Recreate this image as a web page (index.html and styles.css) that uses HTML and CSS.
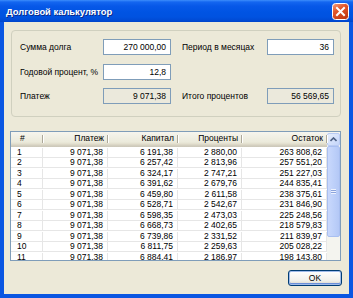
FILE: index.html
```html
<!DOCTYPE html>
<html lang="ru">
<head>
<meta charset="utf-8">
<title>Долговой калькулятор</title>
<link rel="stylesheet" href="styles.css">
</head>
<body>
<div class="window">
  <div class="titlebar">
    <span class="title">Долговой калькулятор</span>
    <span class="close">
      <svg width="17" height="17" viewBox="0 0 17 17">
        <defs>
          <linearGradient id="cg" x1="0" y1="0" x2="0.6" y2="1">
            <stop offset="0" stop-color="#f0a283"/>
            <stop offset="0.45" stop-color="#e2562a"/>
            <stop offset="1" stop-color="#c23a12"/>
          </linearGradient>
        </defs>
        <rect x="0.5" y="0.5" width="16" height="16" rx="3" fill="url(#cg)" stroke="#ffffff"/>
        <path d="M5 5 L12 12 M12 5 L5 12" stroke="#ffffff" stroke-width="2" stroke-linecap="square"/>
      </svg>
    </span>
  </div>
  <div class="client">
    <div class="group">
      <span class="lbl">Сумма долга</span>
      <span class="input">270 000,00</span>
      <span class="lbl second">Период в месяцах</span>
      <span class="input">36</span>

      <span class="lbl">Годовой процент, %</span>
      <span class="input">12,8</span>
      <span class="lbl second"></span>
      <span class="blank"></span>

      <span class="lbl">Платеж</span>
      <span class="input ro">9 071,38</span>
      <span class="lbl second">Итого процентов</span>
      <span class="input ro">56 569,65</span>
    </div>

    <div class="listview">
      <div class="table">
        <div class="row head">
          <span class="c num">#</span>
          <span class="c">Платеж</span>
          <span class="c">Капитал</span>
          <span class="c">Проценты</span>
          <span class="c">Остаток</span>
        </div>
        <div class="row"><span class="c num">1</span><span class="c">9 071,38</span><span class="c">6 191,38</span><span class="c">2 880,00</span><span class="c">263 808,62</span></div>
        <div class="row"><span class="c num">2</span><span class="c">9 071,38</span><span class="c">6 257,42</span><span class="c">2 813,96</span><span class="c">257 551,20</span></div>
        <div class="row"><span class="c num">3</span><span class="c">9 071,38</span><span class="c">6 324,17</span><span class="c">2 747,21</span><span class="c">251 227,03</span></div>
        <div class="row"><span class="c num">4</span><span class="c">9 071,38</span><span class="c">6 391,62</span><span class="c">2 679,76</span><span class="c">244 835,41</span></div>
        <div class="row"><span class="c num">5</span><span class="c">9 071,38</span><span class="c">6 459,80</span><span class="c">2 611,58</span><span class="c">238 375,61</span></div>
        <div class="row"><span class="c num">6</span><span class="c">9 071,38</span><span class="c">6 528,71</span><span class="c">2 542,67</span><span class="c">231 846,90</span></div>
        <div class="row"><span class="c num">7</span><span class="c">9 071,38</span><span class="c">6 598,35</span><span class="c">2 473,03</span><span class="c">225 248,56</span></div>
        <div class="row"><span class="c num">8</span><span class="c">9 071,38</span><span class="c">6 668,73</span><span class="c">2 402,65</span><span class="c">218 579,83</span></div>
        <div class="row"><span class="c num">9</span><span class="c">9 071,38</span><span class="c">6 739,86</span><span class="c">2 331,52</span><span class="c">211 839,97</span></div>
        <div class="row"><span class="c num">10</span><span class="c">9 071,38</span><span class="c">6 811,75</span><span class="c">2 259,63</span><span class="c">205 028,22</span></div>
        <div class="row"><span class="c num">11</span><span class="c">9 071,38</span><span class="c">6 884,41</span><span class="c">2 186,97</span><span class="c">198 143,80</span></div>
      </div>
      <div class="vscroll">
        <span class="sbtn">
          <svg width="7" height="5" viewBox="0 0 7 5"><path d="M0.5 4 L3.5 1 L6.5 4" fill="none" stroke="#4d6185" stroke-width="1.6"/></svg>
        </span>
        <span class="thumb"><span class="grip"></span></span>
      </div>
    </div>

    <div class="buttons">
      <span class="ok">OK</span>
    </div>
  </div>
</div>
</body>
</html>
```

FILE: styles.css
```css
* { box-sizing: border-box; }
html, body { margin: 0; padding: 0; }
body {
  width: 353px;
  height: 298px;
  overflow: hidden;
  font-family: "Liberation Sans", Arial, sans-serif;
  font-size: 8.5px;
  color: #000;
  background: #0054e3;
}
.window {
  width: 353px;
  height: 298px;
  display: flex;
  flex-direction: column;
  background: #0a56e2;
}
.titlebar {
  height: 22px;
  flex: none;
  display: flex;
  align-items: center;
  justify-content: space-between;
  padding: 0 4px 0 6px;
  background: linear-gradient(#3d8dfb 0, #1466f0 2px, #0758e8 6px, #0054e3 12px, #0052e0 17px, #0049d2 21px, #0043c8 22px);
}
.title {
  color: #fff;
  font-weight: bold;
  font-size: 9.4px;
  text-shadow: 1px 1px 0 #0a2a8a;
}
.close { display: flex; width: 17px; height: 17px; }
.client {
  flex: 1;
  margin: 0 4px 4px 4px;
  background: #ece9d8;
  display: flex;
  flex-direction: column;
  padding: 8px 7px 8px 6px;
}
.group {
  margin-left: 1px;
  width: 330px;
  border: 1px solid #d0d0bf;
  border-radius: 4px;
  display: grid;
  grid-template-columns: 83px 68px 11px 85px 67px;
  grid-template-rows: 16px 16px 16px;
  row-gap: 8.5px;
  padding: 8px 6px 12px 8px;
  align-items: center;
}
.lbl { white-space: nowrap; }
.lbl.second { grid-column: 4; }
.input {
  height: 16px;
  border: 1px solid #7f9db9;
  background: #fff;
  text-align: right;
  padding: 0 4px;
  line-height: 14px;
  white-space: nowrap;
}
.input.ro { background: #ebe9dc; }
.blank { height: 16px; }

.listview {
  margin-top: 14px;
  width: 331px;
  height: 130px;
  border: 1px solid #7f9db9;
  background: #fff;
  display: flex;
  overflow: hidden;
}
.table { width: 316px; flex: none; }
.row {
  display: grid;
  grid-template-columns: 32px 65px 70px 64px 85px;
  height: 10.5px;
  line-height: 9.5px;
  padding-top: 0.5px;
  border-bottom: 1px solid #e6e6e6;
}
.row .c {
  text-align: right;
  padding-right: 4px;
  border-right: 1px solid #e6e6e6;
  white-space: nowrap;
}
.row .c.num { text-align: left; padding-left: 6px; padding-right: 0; }
.row.head {
  height: 15px;
  line-height: 13px;
  padding-top: 0;
  background: linear-gradient(#f6f5ee 0, #ebeadb 10px, #e2decd 12px, #d6d2c2 13px, #cbc7b8 15px);
  border-bottom: none;
}
.row.head .c {
  border-right: none;
  position: relative;
}
.row.head .c::after {
  content: "";
  position: absolute;
  right: 0;
  top: 3px;
  bottom: 4px;
  width: 1px;
  background: #aca899;
  box-shadow: 1px 0 0 #fff;
}
.row.head .c.num { padding-left: 9px; }

.vscroll {
  width: 13px;
  flex: none;
  background: #f4f4ef;
  display: flex;
  flex-direction: column;
  padding-top: 1px;
}
.sbtn {
  height: 13px;
  border: 1px solid #b9cbf3;
  border-radius: 2px;
  background: linear-gradient(135deg, #e6eefc, #c4d5fa);
  display: flex;
  align-items: center;
  justify-content: center;
}
.thumb {
  height: 91px;
  border: 1px solid #a9bff0;
  border-radius: 2px;
  background: linear-gradient(90deg, #c9d8fc, #bccff9 60%, #b4c8f6);
  display: flex;
  align-items: center;
  justify-content: center;
}
.grip {
  width: 5px;
  height: 5px;
  background: repeating-linear-gradient(#eef3fe 0, #eef3fe 1px, #8ca4dc 1px, #8ca4dc 2px);
}

.buttons {
  margin-top: 9px;
  display: flex;
  justify-content: flex-end;
}
.ok {
  width: 54px;
  height: 16px;
  border: 1px solid #003c74;
  border-radius: 3px;
  background: linear-gradient(#ffffff, #f0f0ea 70%, #d6d0c5);
  box-shadow: inset 0 0 0 1px #9fbbea, inset 0 -1px 0 1px #6a8fd9;
  display: flex;
  align-items: center;
  justify-content: center;
}
```
